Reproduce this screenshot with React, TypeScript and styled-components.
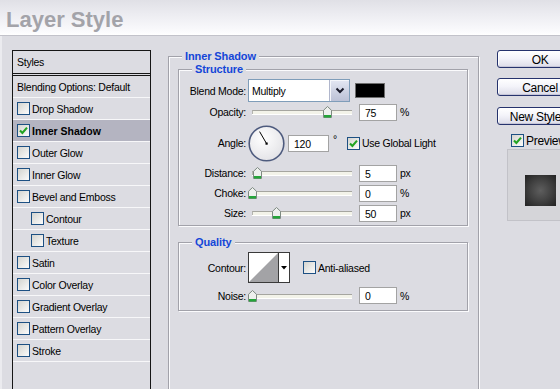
import React from "react";
import styled, { createGlobalStyle } from "styled-components";

const Global = createGlobalStyle`
  html, body { margin: 0; padding: 0; }
  body {
    width: 560px; height: 389px; overflow: hidden;
    background: #dcdce2;
    font-family: "Liberation Sans", Arial, sans-serif;
    font-size: 10.5px; color: #000;
  }
  * { box-sizing: border-box; }
`;

const Window = styled.div`
  width: 560px; height: 389px; display: flex; flex-direction: column; overflow: hidden;
`;

const TitleBar = styled.div`
  height: 36px; flex: none; padding: 9px 0 0 6px;
  background: linear-gradient(to bottom, #e0e0e6 0%, #ececf1 40%, #fbfbfd 92%, #ffffff 100%);
  border-bottom: 1px solid #c2c2ca;
`;

const Title = styled.h1`
  margin: 0; font: bold 22px/22px "Liberation Sans", Arial, sans-serif; color: #a3a3a9;
`;

const Body = styled.div`
  flex: 1; min-height: 0; display: flex; align-items: flex-start; overflow: hidden;
  padding: 14px 0 0 10px; border-left: 2px solid #ebebef;
`;

const ListBox = styled.div`
  flex: none; width: 139px; height: 360px; display: flex; flex-direction: column;
  border: 1px solid #161616; border-bottom: none;
  letter-spacing: -0.25px;
`;

const ListHeader = styled.div`
  height: 23px; flex: none; display: flex; align-items: center; padding-left: 4px;
  border-bottom: 1px solid #161616; margin-bottom: 1px;
`;

const ListBlending = styled.div`
  height: 23px; flex: none; display: flex; align-items: center; padding-left: 4px;
  border-top: 1px solid #161616; border-bottom: 1px solid #f7f7f9;
`;

const ListItem = styled.div<{ $indent?: boolean; $active?: boolean }>`
  height: 22px; flex: none; display: flex; align-items: center; gap: 2px;
  padding-left: ${(p) => (p.$indent ? 18 : 4)}px;
  border-bottom: 1px solid #f7f7f9;
  background: ${(p) => (p.$active ? "#b4b4c1" : "transparent")};
  font-weight: ${(p) => (p.$active ? "bold" : "normal")};
  letter-spacing: ${(p) => (p.$active ? "0px" : "-0.25px")};
`;

const Box = styled.span`
  flex: none; width: 13px; height: 13px; display: inline-flex; align-items: center; justify-content: center;
  border: 1px solid #1d5083;
  background: linear-gradient(135deg, #d4d4cf 0%, #ececea 60%, #fbfbfb 100%);
`;

const Check = ({ checked }: { checked?: boolean }) => (
  <Box>
    {checked && (
      <svg width="11" height="11" viewBox="0 0 11 11">
        <path d="M2 5.5 L4.4 8 L9 2.6" fill="none" stroke="#22a322" strokeWidth="2.1" />
      </svg>
    )}
  </Box>
);

const Main = styled.div`
  flex: none; width: 311px; margin-left: 17px;
`;

const Group = styled.fieldset<{ $w?: number; $h?: number; $mt?: number; $pb?: number }>`
  margin: ${(p) => p.$mt ?? 0}px 0 0 0;
  padding: 0 0 ${(p) => p.$pb ?? 0}px 0;
  width: ${(p) => (p.$w ? `${p.$w}px` : "auto")};
  ${(p) => (p.$h ? `height: ${p.$h}px;` : "")}
  border: 1px solid #a2a2aa;
  box-shadow: inset 1px 1px 0 #fbfbfd, 1px 1px 0 #fbfbfd;
  min-width: 0;
`;

const OuterGroup = styled(Group)`
  padding: 0 9px 0 9px;
`;

const Legend = styled.legend<{ $ml: number }>`
  margin-left: ${(p) => p.$ml}px; padding: 0 3px;
  font-size: 11px; font-weight: bold; color: #1446d8; line-height: 13px; letter-spacing: -0.1px;
  background: #dcdce2;
`;

const GroupBody = styled.div<{ $pt: number }>`
  padding-top: ${(p) => p.$pt}px; display: flex; flex-direction: column;
`;

const Row = styled.div<{ $h: number; $mt?: number }>`
  height: ${(p) => p.$h}px; margin-top: ${(p) => p.$mt ?? 0}px;
  display: flex; align-items: center; letter-spacing: -0.25px;
`;

const FieldLabel = styled.span`
  flex: none; width: 67px; margin-right: 2px; text-align: right;
`;

const Select = styled.div`
  flex: none; width: 102px; height: 23px; display: flex; align-items: stretch;
  border: 1px solid #7f9db9; background: #fff;
`;

const SelectText = styled.span`
  flex: 1; display: flex; align-items: center; padding-left: 3px; padding-top: 1px;
`;

const SelectButton = styled.span`
  flex: none; width: 20px; display: flex; align-items: center; justify-content: center;
  background: linear-gradient(to bottom, #e4e7f3 0%, #cdd1e2 55%, #bcc1d6 100%);
  border-left: 1px solid #b0b6cc;
  box-shadow: inset 1px 1px 0 #f5f6fb;
`;

const Swatch = styled.span`
  flex: none; width: 30px; height: 15px; margin-left: 5px;
  background: #000; border: 1px solid #6e6e6e;
`;

const NumInput = styled.span<{ $w?: number; $ml?: number }>`
  flex: none; width: ${(p) => p.$w ?? 38}px; height: 17px; margin-left: ${(p) => p.$ml ?? 3}px;
  display: flex; align-items: center; padding-left: 5px; padding-top: 1px;
  background: #fff; border: 1px solid #a3a3a3;
`;

const Unit = styled.span<{ $ml?: number }>`
  margin-left: ${(p) => p.$ml ?? 3}px;
`;

const SliderWrap = styled.span`
  flex: none; position: relative; width: 108px; height: 14px; display: flex; align-items: center;
  padding: 0 4px;
`;

const Track = styled.span`
  flex: 1; height: 4px; background: #f3f3e9;
  border-top: 1px solid #a6a6a0; border-left: 1px solid #b4b4ae;
  box-shadow: 0 1px 0 #ffffff;
`;

const ThumbHolder = styled.span`
  position: absolute; top: 1px; width: 9px; height: 12px; margin-left: -4px; display: flex;
`;

const Slider = ({ value }: { value: number }) => (
  <SliderWrap>
    <Track />
    <ThumbHolder style={{ left: `${4 + value}px` }}>
      <svg width="9" height="12" viewBox="0 0 9 12">
        <path d="M4.5 0.5 L8.5 4.3 V11.5 H0.5 V4.3 Z" fill="#eef0ee" stroke="#7e8a82" strokeWidth="1" />
        <rect x="1" y="9" width="7" height="2.5" fill="#25a53a" />
      </svg>
    </ThumbHolder>
  </SliderWrap>
);

const Dial = () => (
  <svg width="37" height="37" viewBox="0 0 37 37">
    <defs>
      <radialGradient id="dialg" cx="40%" cy="35%" r="70%">
        <stop offset="0%" stopColor="#ffffff" />
        <stop offset="100%" stopColor="#e2e2e6" />
      </radialGradient>
    </defs>
    <circle cx="18.5" cy="18.5" r="17.3" fill="url(#dialg)" stroke="#4e5b7e" strokeWidth="1.6" />
    <line x1="18.5" y1="18.5" x2="11.6" y2="6.6" stroke="#000" strokeWidth="1" />
    <rect x="17.5" y="17.5" width="2.2" height="2.2" fill="#000" />
  </svg>
);

const Degree = styled.span`
  margin-left: 4px; align-self: flex-start; margin-top: 10px;
`;

const CheckLabel = styled.span<{ $ml: number }>`
  display: flex; align-items: center; gap: 2px; margin-left: ${(p) => p.$ml}px;
`;

const ContourPicker = styled.span`
  flex: none; width: 42px; height: 31px; display: flex;
  border: 1px solid #3a3a3a; background: #fff;
`;

const ContourArrow = styled.span`
  flex: 1; display: flex; align-items: center; justify-content: center;
  border-left: 1px solid #3a3a3a;
`;

const Side = styled.div`
  flex: none; width: 90px; margin-left: 18px; display: flex; flex-direction: column;
`;

const Button = styled.div<{ $mt?: number }>`
  width: 86px; height: 18px; margin-top: ${(p) => p.$mt ?? 0}px;
  display: flex; align-items: center; justify-content: center; white-space: nowrap;
  font-size: 12px; letter-spacing: -0.3px; padding-top: 1px;
  border: 1px solid #26336d; border-radius: 3px;
  background: linear-gradient(to bottom, #ffffff 0%, #f4f4fa 45%, #dcdce8 100%);
  box-shadow: inset 0 -1px 0 #c6c6d8, inset 1px 1px 0 #ffffff;
`;

const PreviewRow = styled.div`
  margin-top: 9px; padding-left: 14px; height: 13px; display: flex; align-items: center; gap: 2px;
  font-size: 12px; letter-spacing: -0.3px; white-space: nowrap;
`;

const PreviewBox = styled.div`
  width: 66px; height: 72px; margin: 2px 0 0 10px; padding: 25px 0 0 17px;
  background: #d5d5d9; border: 1px solid #c2c2c8; border-right: none;
`;

const PreviewSquare = styled.div`
  width: 31px; height: 31px;
  background: radial-gradient(circle at 50% 50%, #5e5e5e 0%, #444 45%, #222 100%);
`;

const styles: { name: string; indent?: boolean; checked?: boolean }[] = [
  { name: "Drop Shadow" },
  { name: "Inner Shadow", checked: true },
  { name: "Outer Glow" },
  { name: "Inner Glow" },
  { name: "Bevel and Emboss" },
  { name: "Contour", indent: true },
  { name: "Texture", indent: true },
  { name: "Satin" },
  { name: "Color Overlay" },
  { name: "Gradient Overlay" },
  { name: "Pattern Overlay" },
  { name: "Stroke" },
];

export default function App() {
  return (
    <>
      <Global />
      <Window>
        <TitleBar>
          <Title>Layer Style</Title>
        </TitleBar>
        <Body>
          <ListBox>
            <ListHeader>Styles</ListHeader>
            <ListBlending>Blending Options: Default</ListBlending>
            {styles.map((s) => (
              <ListItem key={s.name} $indent={s.indent} $active={s.checked}>
                <Check checked={s.checked} />
                <span>{s.name}</span>
              </ListItem>
            ))}
          </ListBox>

          <Main>
            <OuterGroup $h={345}>
              <Legend $ml={4}>Inner Shadow</Legend>
              <Group $w={290} $pb={2}>
                <Legend $ml={13}>Structure</Legend>
                <GroupBody $pt={3}>
                  <Row $h={23}>
                    <FieldLabel>Blend Mode:</FieldLabel>
                    <Select>
                      <SelectText>Multiply</SelectText>
                      <SelectButton>
                        <svg width="10" height="7" viewBox="0 0 10 7">
                          <path d="M1.5 1.5 L5 5 L8.5 1.5" fill="none" stroke="#1a1a2a" strokeWidth="2" />
                        </svg>
                      </SelectButton>
                    </Select>
                    <Swatch />
                  </Row>
                  <Row $h={18} $mt={1}>
                    <FieldLabel>Opacity:</FieldLabel>
                    <Slider value={75} />
                    <NumInput>75</NumInput>
                    <Unit>%</Unit>
                  </Row>
                  <Row $h={40} $mt={2}>
                    <FieldLabel>Angle:</FieldLabel>
                    <Dial />
                    <NumInput $w={41} $ml={3}>120</NumInput>
                    <Degree>°</Degree>
                    <CheckLabel $ml={10}>
                      <Check checked />
                      <span>Use Global Light</span>
                    </CheckLabel>
                  </Row>
                  <Row $h={20}>
                    <FieldLabel>Distance:</FieldLabel>
                    <Slider value={5} />
                    <NumInput>5</NumInput>
                    <Unit>px</Unit>
                  </Row>
                  <Row $h={20}>
                    <FieldLabel>Choke:</FieldLabel>
                    <Slider value={0} />
                    <NumInput>0</NumInput>
                    <Unit>%</Unit>
                  </Row>
                  <Row $h={20}>
                    <FieldLabel>Size:</FieldLabel>
                    <Slider value={24} />
                    <NumInput>50</NumInput>
                    <Unit>px</Unit>
                  </Row>
                </GroupBody>
              </Group>

              <Group $w={290} $mt={10} $pb={5}>
                <Legend $ml={13}>Quality</Legend>
                <GroupBody $pt={3}>
                  <Row $h={31}>
                    <FieldLabel>Contour:</FieldLabel>
                    <ContourPicker>
                      <svg width="29" height="29" viewBox="0 0 29 29">
                        <polygon points="0,29 29,0 29,29" fill="#a3a3a6" />
                      </svg>
                      <ContourArrow>
                        <svg width="6" height="4" viewBox="0 0 6 4">
                          <polygon points="0,0 6,0 3,3.5" fill="#000" />
                        </svg>
                      </ContourArrow>
                    </ContourPicker>
                    <CheckLabel $ml={13}>
                      <Check />
                      <span>Anti-aliased</span>
                    </CheckLabel>
                  </Row>
                  <Row $h={19} $mt={3}>
                    <FieldLabel>Noise:</FieldLabel>
                    <Slider value={0} />
                    <NumInput>0</NumInput>
                    <Unit>%</Unit>
                  </Row>
                </GroupBody>
              </Group>
            </OuterGroup>
          </Main>

          <Side>
            <Button>OK</Button>
            <Button $mt={10}>Cancel</Button>
            <Button $mt={11}>New Style...</Button>
            <PreviewRow>
              <Check checked />
              <span>Preview</span>
            </PreviewRow>
            <PreviewBox>
              <PreviewSquare />
            </PreviewBox>
          </Side>
        </Body>
      </Window>
    </>
  );
}
